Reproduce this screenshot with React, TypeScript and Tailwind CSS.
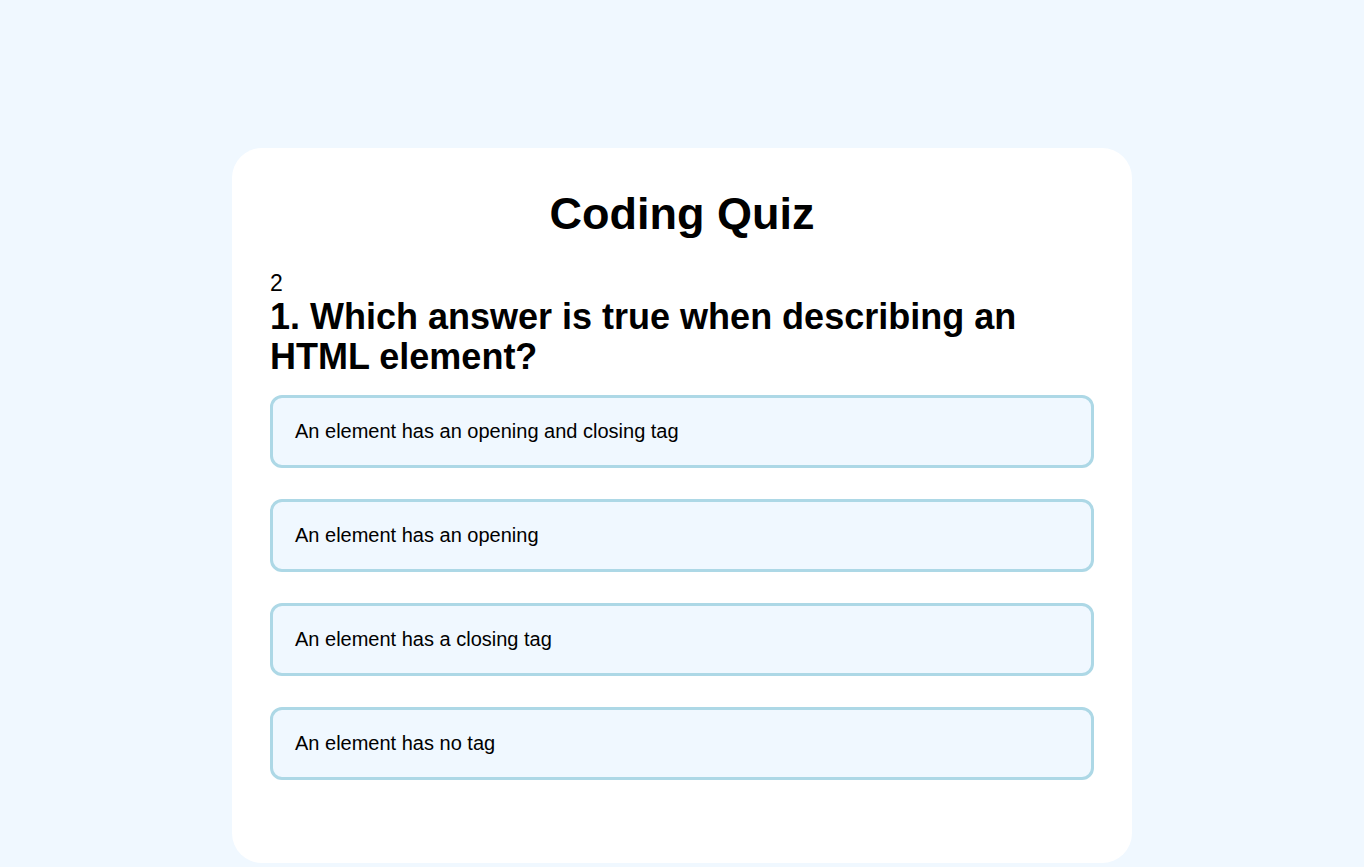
const options = [
  "An element has an opening and closing tag",
  "An element has an opening",
  "An element has a closing tag",
  "An element has no tag",
];

export default function App() {
  return (
    <div
      className="min-h-screen bg-[#f0f8ff] pt-[148px] pb-[5px] text-black"
      style={{ fontFamily: '"Liberation Sans", Arial, sans-serif' }}
    >
      <div className="mx-auto w-[900px] rounded-[30px] bg-white px-[38px] pt-[40px] pb-[83px]">
        <h1 className="text-center text-[45px] font-bold leading-[52px] mb-[30px]">Coding Quiz</h1>
        <div className="text-[23px] leading-[27px]">2</div>
        <h2 className="text-4xl font-bold leading-10 mb-[18px]">
          1. Which answer is true when describing an HTML element?
        </h2>
        <div className="flex flex-col gap-[31px]">
          {options.map((opt) => (
            <button
              key={opt}
              className="w-full rounded-[12px] border-[3px] border-[#add8e6] bg-[#f0f8ff] px-[22px] py-[22px] text-left text-[20px] leading-[23px]"
            >
              {opt}
            </button>
          ))}
        </div>
      </div>
    </div>
  );
}
